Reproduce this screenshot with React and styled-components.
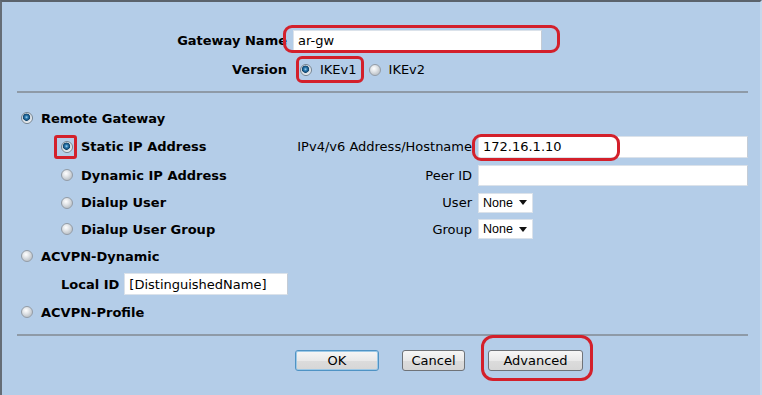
import React from "react";
import styled, { createGlobalStyle } from "styled-components";

const GlobalStyle = createGlobalStyle`
  html, body {
    margin: 0;
    padding: 0;
  }
  body {
    background: #b4cde8;
    font-family: "DejaVu Sans", Verdana, sans-serif;
  }
`;

const Page = styled.div`
  width: 762px;
  height: 395px;
  box-sizing: border-box;
  border-top: 2px solid #5b636c;
  border-left: 2px solid #656d76;
  border-right: 2px solid #c6d8ec;
  background: #b4cde8;
  font-size: 13px;
  color: #000;
  overflow: hidden;
`;

const TopGrid = styled.div`
  display: grid;
  grid-template-columns: 285px 1fr;
  column-gap: 6px;
  row-gap: 11px;
  padding-top: 28px;
  align-items: center;
`;

const Label = styled.div`
  text-align: right;
  font-weight: ${(p) => (p.$bold ? "bold" : "normal")};
  white-space: nowrap;
`;

const Divider = styled.div`
  height: 0;
  border-top: 2px solid #8e9aa7;
  margin: ${(p) => p.$m} 12px 0 15px;
`;

const TextInput = styled.input`
  box-sizing: border-box;
  width: ${(p) => p.$w || "100%"};
  height: ${(p) => p.$h || "21px"};
  margin: 0;
  padding: 0 4px;
  border: 1px solid #dbe2ea;
  border-right-color: #c4ccd6;
  background: #fff;
  font: 13px "DejaVu Sans", Verdana, sans-serif;
  color: #000;
  outline: none;
  display: block;
`;

const RadioDot = styled.span`
  display: inline-block;
  flex: none;
  width: 12px;
  height: 12px;
  box-sizing: border-box;
  border-radius: 50%;
  border: 1px solid ${(p) => (p.$on ? "#75838f" : "#939ca6")};
  background: ${(p) =>
    p.$on
      ? "radial-gradient(circle at 45% 42%, #a6d6f2 0, #2c7bb2 1.5px, #10446c 3.3px, #cfd8e0 3.9px, #f3f5f7 5.8px)"
      : "radial-gradient(circle at 40% 35%, #ffffff 0, #e3e6e9 3px, #c4c9ce 6px)"};
`;

const RadioOption = styled.span`
  display: inline-flex;
  align-items: center;
  gap: 8px;
  font-weight: ${(p) => (p.$bold ? "bold" : "normal")};
  white-space: nowrap;
`;

const RadioGroup = styled.div`
  display: flex;
  align-items: center;
  gap: 12px;
  padding-left: 7px;
`;

const Mark = styled.span`
  position: relative;
  display: inline-flex;
  align-items: center;

  &::after {
    content: "";
    position: absolute;
    inset: ${(p) => p.$inset};
    width: ${(p) => p.$w || "auto"};
    border: 3px solid #d3202b;
    border-radius: ${(p) => p.$r || "8px"};
    pointer-events: none;
  }
`;

const Rows = styled.div`
  padding: 11px 12px 0 0;
`;

const Row = styled.div`
  display: grid;
  grid-template-columns: 286px 178px 1fr;
  column-gap: 6px;
  align-items: center;
  height: ${(p) => p.$h}px;
`;

const Left = styled.div`
  display: flex;
  align-items: center;
  gap: 5px;
  padding-left: ${(p) => (p.$level ? 59 : 19)}px;
`;

const BoldText = styled.span`
  font-weight: bold;
  white-space: nowrap;
  margin-left: ${(p) => p.$ml || 0}px;
`;

const SelectBox = styled.div`
  box-sizing: border-box;
  width: 55px;
  height: 20px;
  background: #fff;
  border: 1px solid #dbe2ea;
  display: flex;
  align-items: center;
  justify-content: space-between;
  padding: 0 5px 0 4px;
  font: 12.5px "Liberation Sans", Arial, sans-serif;
`;

const Caret = styled.span`
  width: 0;
  height: 0;
  border-left: 4px solid transparent;
  border-right: 4px solid transparent;
  border-top: 5px solid #111;
`;

const Buttons = styled.div`
  display: flex;
  align-items: center;
  gap: 23px;
  padding: 14px 0 0 293px;
`;

const Button = styled.button`
  box-sizing: border-box;
  width: ${(p) => p.$w}px;
  height: 21px;
  margin: 0;
  padding: 0;
  border-radius: 3px;
  border: 1px solid ${(p) => (p.$primary ? "#4f93c4" : "#6f7378")};
  box-shadow: ${(p) => (p.$primary ? "inset 0 0 0 1px #9cc8e6" : "none")};
  background: linear-gradient(#f6f6f6, #e9e9e9 50%, #dcdcdc 51%, #d6d6d6);
  font: 13px "DejaVu Sans", Verdana, sans-serif;
  color: #000;
`;

const Radio = ({ on, bold, children }) => (
  <RadioOption $bold={bold}>
    <RadioDot $on={on} />
    {children}
  </RadioOption>
);

export default function App() {
  return (
    <Page>
      <GlobalStyle />
      <TopGrid>
        <Label $bold>Gateway Name</Label>
        <div>
          <Mark $inset="-5px -18px -2px -10px" $r="9px">
            <TextInput $w="249px" defaultValue="ar-gw" readOnly />
          </Mark>
        </div>
        <Label $bold>Version</Label>
        <RadioGroup>
          <Mark $inset="-6px -7px -6px -4px" $r="6px">
            <Radio on>IKEv1</Radio>
          </Mark>
          <Radio>IKEv2</Radio>
        </RadioGroup>
      </TopGrid>

      <Divider $m="14px" />

      <Rows>
        <Row $h={28}>
          <Left>
            <Radio on bold>Remote Gateway</Radio>
          </Left>
        </Row>
        <Row $h={29}>
          <Left $level={1}>
            <Mark $inset="-6px -4px -6px -7px" $r="3px">
              <RadioDot $on />
            </Mark>
            <BoldText $ml={3}>Static IP Address</BoldText>
          </Left>
          <Label>IPv4/v6 Address/Hostname</Label>
          <Mark $inset="-2px auto -3px -6px" $w="142px" $r="9px">
            <TextInput $h="22px" defaultValue="172.16.1.10" readOnly />
          </Mark>
        </Row>
        <Row $h={28}>
          <Left $level={1}>
            <Radio bold>Dynamic IP Address</Radio>
          </Left>
          <Label>Peer ID</Label>
          <TextInput $h="21px" readOnly />
        </Row>
        <Row $h={27}>
          <Left $level={1}>
            <Radio bold>Dialup User</Radio>
          </Left>
          <Label>User</Label>
          <SelectBox>
            None <Caret />
          </SelectBox>
        </Row>
        <Row $h={26}>
          <Left $level={1}>
            <Radio bold>Dialup User Group</Radio>
          </Left>
          <Label>Group</Label>
          <SelectBox>
            None <Caret />
          </SelectBox>
        </Row>
        <Row $h={28}>
          <Left>
            <Radio bold>ACVPN-Dynamic</Radio>
          </Left>
        </Row>
        <Row $h={28}>
          <Left $level={1}>
            <BoldText>Local ID</BoldText>
            <TextInput $w="164px" $h="22px" defaultValue="[DistinguishedName]" readOnly />
          </Left>
        </Row>
        <Row $h={28}>
          <Left>
            <Radio bold>ACVPN-Profile</Radio>
          </Left>
        </Row>
      </Rows>

      <Divider $m="8px" />

      <Buttons>
        <Button $primary $w={84}>OK</Button>
        <Button $w={63}>Cancel</Button>
        <Mark $inset="-15px -10px -10px -7px" $r="12px">
          <Button $w={95}>Advanced</Button>
        </Mark>
      </Buttons>
    </Page>
  );
}
